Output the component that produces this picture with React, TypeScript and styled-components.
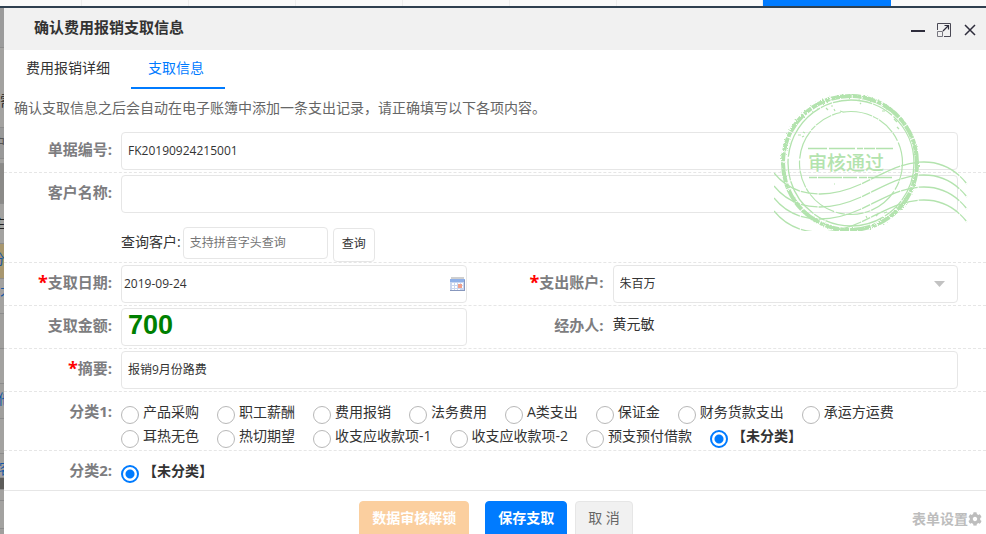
import React, { useState } from "react";
import styled, { createGlobalStyle } from "styled-components";
import { FaCog } from "react-icons/fa";

const sans = `"Open Sans", "Noto Sans CJK SC", sans-serif`;
const line = "#e6e6e6";
const blue = "#007bff";
const ink = "#333";

const GlobalStyle = createGlobalStyle`
  *, *::before, *::after { box-sizing: border-box; }
  body { margin: 0; background: #fff; }
  body, button, input, select { font-family: ${sans}; }
`;

const Page = styled.div`
  display: flex;
  flex-direction: column;
  height: 100vh;
  overflow: hidden;
  color: ${ink};
  font-size: 14px;
  line-height: 20px;
`;

const TopStrip = styled.div`
  display: flex;
  flex: none;
  height: 8px;
  background: #fafafa;
  border-bottom: 2px solid #2f4050;
`;

const TopTab = styled.span<{ $width: number; $active?: boolean }>`
  flex: none;
  width: ${(p) => p.$width}px;
  background: ${(p) => (p.$active ? blue : "transparent")};
  border-right: ${(p) => (p.$active ? "none" : "1px solid #eee")};
`;

const Stage = styled.div`
  display: flex;
  flex: 1;
  min-height: 0;
`;

const Behind = styled.aside`
  flex: none;
  width: 4px;
  overflow: hidden;
`;

const BehindRow = styled.div<{ $height: number; $bg: string; $ink?: string; $top?: number; $indent?: number }>`
  height: ${(p) => p.$height}px;
  overflow: hidden;
  white-space: nowrap;
  background: ${(p) => p.$bg};
  border-bottom: 1px solid #8c8c8c;
  color: ${(p) => p.$ink || "#222"};
  padding-top: ${(p) => p.$top || 0}px;
  text-indent: ${(p) => p.$indent || 0}px;
`;

const Dialog = styled.section`
  position: relative;
  display: flex;
  flex-direction: column;
  flex: 1;
  min-width: 0;
  background: #fff;
`;

const TitleBar = styled.header`
  display: flex;
  align-items: flex-start;
  justify-content: space-between;
  flex: none;
  height: 42px;
  padding: 9px 8px 0 30px;
  background: #f1f1f1;
`;

const Title = styled.h1`
  margin: 0;
  font-size: 15px;
  line-height: 20px;
  font-weight: 700;
`;

const WindowButtons = styled.div`
  display: flex;
  gap: 10px;
  padding-top: 5px;
`;

const IconButton = styled.button`
  display: block;
  width: 16px;
  height: 16px;
  padding: 0;
  border: 0;
  background: none;
  cursor: pointer;
`;

const Tabs = styled.nav`
  display: flex;
  flex: none;
  gap: 4px;
  height: 39px;
  padding-left: 5px;
`;

const Tab = styled.button<{ $active?: boolean }>`
  min-width: 94px;
  padding: 0 17px 2px;
  border: 0;
  border-bottom: 2px solid ${(p) => (p.$active ? blue : "transparent")};
  background: none;
  color: ${(p) => (p.$active ? blue : ink)};
  font-size: 14px;
  line-height: 20px;
  text-align: left;
  cursor: pointer;
`;

const Notice = styled.p`
  margin: 0;
  padding: 9px 10px 12px;
  color: #666;
`;

const Row = styled.div<{ $solid?: boolean; $single?: boolean }>`
  display: grid;
  grid-template-columns: ${(p) => (p.$single ? "117px 1fr" : "117px 1fr 146px 1fr")};
  padding: 2px 28px 2px 0;
  border-bottom: 1px ${(p) => (p.$solid ? "solid" : "dashed")} ${line};
`;

const Label = styled.label`
  display: flex;
  justify-content: flex-end;
  align-items: center;
  height: 34px;
  padding-right: 9px;
  color: #7d7d80;
  font-size: 15px;
  font-weight: 700;
  white-space: nowrap;
`;

const Star = styled.span`
  color: #f00;
  font-size: 18px;
`;

const TextInput = styled.input<{ $left?: number; $height?: number }>`
  width: 100%;
  height: ${(p) => p.$height || 38}px;
  padding: 0 6px 2px ${(p) => p.$left || 6}px;
  border: 1px solid ${line};
  border-radius: 4px;
  background: #fff;
  color: ${ink};
  font-size: 12px;
  outline: none;
  &::placeholder { color: #757575; opacity: 1; }
`;

const AmountInput = styled(TextInput)`
  padding-bottom: 3px;
  color: #008000;
  font-family: "Liberation Sans", Arial, sans-serif;
  font-size: 27px;
  font-weight: 700;
`;

const Select = styled.select`
  appearance: none;
  width: 100%;
  height: 38px;
  padding: 0 28px 2px 6px;
  border: 1px solid ${line};
  border-radius: 4px;
  background: #fff;
  color: ${ink};
  font-size: 12px;
`;

const Adorned = styled.div`
  display: grid;
  align-items: center;
  > * { grid-area: 1 / 1; }
  > svg { justify-self: end; pointer-events: none; }
`;

const DateIcon = styled.svg`
  margin-right: 2px;
`;

const Arrow = styled.svg`
  margin-right: 13px;
`;

const Search = styled.div`
  display: flex;
  align-items: flex-start;
  height: 47px;
  padding-top: 14px;
`;

const SearchLabel = styled.label`
  padding: 5px 2px 0 0;
  white-space: nowrap;
`;

const SearchBox = styled.div`
  width: 145px;
  margin-right: 5px;
`;

const SearchButton = styled.button`
  width: 42px;
  height: 34px;
  margin-top: 1px;
  padding: 0 0 4px;
  border: 1px solid ${line};
  border-radius: 4px;
  background: #fff;
  color: ${ink};
  font-size: 12px;
`;

const Plain = styled.output`
  line-height: 32px;
`;

const Choices = styled.div<{ $bottom: number }>`
  display: flex;
  flex-wrap: wrap;
  padding: 6px 0 ${(p) => p.$bottom}px;
`;

const Choice = styled.label<{ $bold?: boolean }>`
  display: flex;
  gap: 4px;
  height: 24px;
  padding-right: 18px;
  font-weight: ${(p) => (p.$bold ? 700 : 400)};
  line-height: 24px;
  white-space: nowrap;
`;

const Radio = styled.input`
  appearance: none;
  flex: none;
  width: 18px;
  height: 18px;
  margin: 6px 0 0;
  border: 1px solid #b8b8b8;
  border-radius: 50%;
  background: #fff;
  &:checked {
    border: 2px solid ${blue};
    background: radial-gradient(circle, ${blue} 4px, #fff 5px);
  }
`;

const Footer = styled.footer`
  display: grid;
  grid-template-columns: 1fr auto 1fr;
  align-items: start;
  padding: 10px 4px 0 6px;
`;

const Actions = styled.div`
  display: flex;
  grid-column: 2;
  gap: 8px;
`;

const Action = styled.button<{ $tone: "locked" | "primary" | "plain" }>`
  height: 38px;
  padding: 0 12px 6px;
  margin-right: ${(p) => (p.$tone === "locked" ? 8 : 0)}px;
  border: 1px solid ${(p) => ({ locked: "#fbcf9f", primary: blue, plain: line })[p.$tone]};
  border-radius: 4px;
  background: ${(p) => ({ locked: "#fbcf9f", primary: blue, plain: "#f1f1f1" })[p.$tone]};
  color: ${(p) => (p.$tone === "plain" ? "#666" : "#fff")};
  font-size: 14px;
  font-weight: ${(p) => (p.$tone === "plain" ? 400 : 700)};
  white-space: nowrap;
`;

const Settings = styled.a`
  display: flex;
  justify-self: end;
  align-items: center;
  padding-top: 8px;
  color: #bdbdbd;
  font-weight: 700;
  text-decoration: none;
`;

const StampBox = styled.svg`
  position: absolute;
  top: 86px;
  right: 18px;
  pointer-events: none;
`;

const StampText = styled.text`
  fill: #b3e3ae;
  font-family: ${sans};
  font-size: 19px;
  font-weight: 500;
`;

const wave = "C12 15 28 21 46 21 C88 21 112 -11 150 -11 C168 -11 182 -3 193 11";

function Stamp() {
  return (
    <StampBox width="194" height="137" viewBox="0 0 194 137" role="img" aria-label="审核通过">
      <defs>
        <filter id="worn" x="-5%" y="-5%" width="110%" height="110%">
          <feTurbulence type="fractalNoise" baseFrequency="0.6" numOctaves="2" seed="4" />
          <feDisplacementMap in="SourceGraphic" scale="3" />
        </filter>
      </defs>
      <g fill="none" stroke="#b3e3ae">
        <g filter="url(#worn)">
          <circle cx="76" cy="69" r="67" strokeWidth="4" strokeDasharray="9 1 14 1 5 1 21 1" />
        </g>
        <circle cx="77" cy="69" r="63" strokeWidth="1.3" strokeDasharray="40 1 22 2 60 1 12 1" />
        <circle cx="77" cy="69" r="51.5" strokeWidth="1.2" strokeDasharray="18 1 9 2 30 1 6 1" />
        <path d="M34 54.5H119" strokeWidth="1.4" strokeDasharray="19 2 26 2 6 1 11 1" />
        <path d="M35 83.5H119" strokeWidth="1.4" strokeDasharray="8 1 24 1 14 2" />
        <g strokeWidth="1.3" strokeDasharray="32 1 17 1 44 1 9 1">
          <path d={`M0 0 ${wave}`} transform="translate(0 79)" />
          <path d={`M0 0 ${wave}`} transform="translate(0 92)" />
          <path d={`M0 0 ${wave}`} transform="translate(0 104)" />
          <path d={`M0 0 ${wave}`} transform="translate(0 117)" />
        </g>
        <path
          d="M52 14l2 2M57 12h2M60 15l1 2M66 17l3 1M86 9l1 1M24 41h3M28 43l2-1M29 38l2 1M108 17h3M120 25l3 3M123 33l2 2M60 90h1M102 122l2-2M110 119l3-1M92 122l1 2"
          strokeWidth="1.2"
        />
      </g>
      <StampText x="34" y="76">审核通过</StampText>
    </StampBox>
  );
}

const groupOne = [
  "产品采购", "职工薪酬", "费用报销", "法务费用", "A类支出", "保证金", "财务货款支出", "承运方运费",
  "耳热无色", "热切期望", "收支应收款项-1", "收支应收款项-2", "预支预付借款", "【未分类】",
];
const groupTwo = ["【未分类】"];

function RadioGroup({ name, items, bottom }: { name: string; items: string[]; bottom: number }) {
  const [value, setValue] = useState("【未分类】");
  return (
    <Choices role="radiogroup" aria-labelledby={`${name}-label`} $bottom={bottom}>
      {items.map((item) => (
        <Choice key={item} $bold={item === value}>
          <Radio type="radio" name={name} checked={item === value} onChange={() => setValue(item)} />
          {item}
        </Choice>
      ))}
    </Choices>
  );
}

export default function App() {
  return (
    <Page>
      <GlobalStyle />
      <TopStrip>
        <TopTab $width={82} />
        {[1, 2, 3, 4, 5].map((n) => <TopTab key={n} $width={107} />)}
        <TopTab $width={146} />
        <TopTab $width={128} $active />
      </TopStrip>
      <Stage>
        <Behind aria-hidden="true">
          <BehindRow $height={40} $bg="#9b9b9b" />
          <BehindRow $height={80} $bg="#a3a2a0" $top={43}>需</BehindRow>
          <BehindRow $height={31} $bg="#999" $top={5} $ink="#555" $indent={-8}>户</BehindRow>
          <BehindRow $height={5} $bg="#a3a2a0" />
          <BehindRow $height={40} $bg="#8b8a88" />
          <BehindRow $height={40} $bg="#a3a2a0" $top={9} $indent={-8}>主</BehindRow>
          <BehindRow $height={35} $bg="#a8976f" $top={5} $ink="#1559a5" $indent={-9}>分</BehindRow>
          <BehindRow $height={35} $bg="#a3a2a0" $top={5} $ink="#1559a5">不</BehindRow>
          <BehindRow $height={35} $bg="#a09f9d" />
          <BehindRow $height={35} $bg="#a3a2a0" />
          <BehindRow $height={35} $bg="#a09f9d" $top={5} $ink="#1559a5" $indent={-2}>他</BehindRow>
          <BehindRow $height={35} $bg="#a3a2a0" />
          <BehindRow $height={24} $bg="#a09f9d" $top={5} $ink="#1559a5" $indent={-1}>客</BehindRow>
          <BehindRow $height={12} $bg="#5d5c5a" />
          <BehindRow $height={11} $bg="#a3a2a0" />
          <BehindRow $height={28} $bg="#a3a2a0" />
          <BehindRow $height={10} $bg="#a09f9d" />
        </Behind>
        <Dialog role="dialog" aria-labelledby="dialog-title">
          <TitleBar>
            <Title id="dialog-title">确认费用报销支取信息</Title>
            <WindowButtons>
              <IconButton type="button" aria-label="最小化">
                <svg width="16" height="16" viewBox="0 0 16 16"><path d="M1 9h14" stroke="#2e2d3c" strokeWidth="2" /></svg>
              </IconButton>
              <IconButton type="button" aria-label="最大化">
                <svg width="16" height="16" viewBox="0 0 16 16" fill="none" stroke="#4a4955">
                  <path d="M1.5 8V1.5h13v13H8" />
                  <path d="M1.5 9.5h5v5h-5z" stroke="#77767f" />
                  <path d="M7 9l5.5-5.5M8.5 3.5h4v4" stroke="#2e2d3c" strokeWidth="1.2" />
                </svg>
              </IconButton>
              <IconButton type="button" aria-label="关闭">
                <svg width="16" height="16" viewBox="0 0 16 16"><path d="M3 3l10 10M13 3L3 13" stroke="#2e2d3c" strokeWidth="1.5" /></svg>
              </IconButton>
            </WindowButtons>
          </TitleBar>
          <Tabs>
            <Tab type="button">费用报销详细</Tab>
            <Tab type="button" $active>支取信息</Tab>
          </Tabs>
          <Notice>确认支取信息之后会自动在电子账簿中添加一条支出记录，请正确填写以下各项内容。</Notice>
          <form onSubmit={(e) => e.preventDefault()}>
            <Row $single>
              <Label htmlFor="number">单据编号:</Label>
              <TextInput id="number" defaultValue="FK20190924215001" />
            </Row>
            <Row $single>
              <Label htmlFor="customer">客户名称:</Label>
              <div>
                <TextInput id="customer" />
                <Search>
                  <SearchLabel htmlFor="query">查询客户:</SearchLabel>
                  <SearchBox><TextInput id="query" $height={32} placeholder="支持拼音字头查询" /></SearchBox>
                  <SearchButton type="button">查询</SearchButton>
                </Search>
              </div>
            </Row>
            <Row>
              <Label htmlFor="date"><Star>*</Star>支取日期:</Label>
              <Adorned>
                <TextInput id="date" $left={2} defaultValue="2019-09-24" />
                <DateIcon width="15" height="14" viewBox="0 0 15 14">
                  <path d="M0 2h15v12H0z" fill="#c9d5ee" />
                  <path d="M1 0h13v2H1z" fill="#cfcfcf" />
                  <path d="M0 2h15v3H0z" fill="#8fb0e8" />
                  <path d="M2 6h2v2H2zM5 6h2v2H5zM8 6h2v2H8zM11 6h2v2h-2zM2 9h2v2H2zM5 9h2v2H5zM11 9h2v2h-2zM2 12h2v1H2zM5 12h2v1H5zM8 12h2v1H8z" fill="#fff" />
                  <path d="M8 7h4v4H8z" fill="#f0a08c" />
                  <path d="M14 3h1v11H0v-1h14z" fill="#8797bd" />
                </DateIcon>
              </Adorned>
              <Label htmlFor="account"><Star>*</Star>支出账户:</Label>
              <Adorned>
                <Select id="account" defaultValue="朱百万"><option>朱百万</option></Select>
                <Arrow width="11" height="6" viewBox="0 0 11 6"><path d="M0 0h11L5.5 6z" fill="#c2c2c2" /></Arrow>
              </Adorned>
            </Row>
            <Row>
              <Label htmlFor="amount">支取金额:</Label>
              <AmountInput id="amount" defaultValue="700" />
              <Label htmlFor="handler">经办人:</Label>
              <Plain id="handler">黄元敏</Plain>
            </Row>
            <Row $single>
              <Label htmlFor="summary"><Star>*</Star>摘要:</Label>
              <TextInput id="summary" defaultValue="报销9月份路费" />
            </Row>
            <Row $single>
              <Label as="span" id="group1-label">分类1:</Label>
              <RadioGroup name="group1" items={groupOne} bottom={0} />
            </Row>
            <Row $single $solid>
              <Label as="span" id="group2-label">分类2:</Label>
              <RadioGroup name="group2" items={groupTwo} bottom={5} />
            </Row>
            <Footer>
              <Actions>
                <Action type="button" $tone="locked">数据审核解锁</Action>
                <Action type="submit" $tone="primary">保存支取</Action>
                <Action type="button" $tone="plain">取 消</Action>
              </Actions>
              <Settings href="#settings">
                表单设置
                <FaCog size={14} aria-hidden="true" />
              </Settings>
            </Footer>
          </form>
          <Stamp />
        </Dialog>
      </Stage>
    </Page>
  );
}
